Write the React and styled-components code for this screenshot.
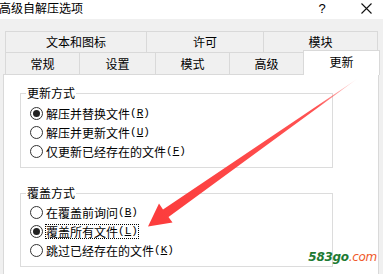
import React from "react";
import styled, { createGlobalStyle } from "styled-components";

const GlobalStyle = createGlobalStyle`
  html, body {
    margin: 0;
    padding: 0;
    background: #f0f0f0;
  }
  body {
    font-family: "Noto Sans CJK SC", "Liberation Sans", sans-serif;
    font-size: 12px;
    color: #000;
  }
`;

const Window = styled.div`
  position: relative;
  width: 383px;
  height: 274px;
  overflow: hidden;
  background: #f0f0f0;
`;

const TitleBar = styled.div`
  height: 19px;
  background: #fff;
  display: flex;
  align-items: center;
`;

const Title = styled.div`
  flex: 1;
  margin-left: -1px;
  font-size: 12px;
  line-height: 14px;
  margin-top: -3px;
`;

const CaptionButton = styled.div`
  width: ${(p) => p.$w}px;
  display: flex;
  justify-content: center;
  align-items: center;
  font-family: "Liberation Sans", sans-serif;
  font-size: 13px;
  line-height: 14px;
  margin-top: -2px;
`;

const Body = styled.div`
  padding-top: 12px;
`;

const TabRow = styled.div`
  display: flex;
  margin-left: 5px;
  height: ${(p) => p.$h}px;
  align-items: flex-end;
`;

const Tab = styled.div`
  box-sizing: border-box;
  width: ${(p) => p.$w}px;
  height: ${(p) => (p.$active ? 25 : p.$h)}px;
  margin-left: ${(p) => (p.$first ? 0 : -1)}px;
  margin-bottom: ${(p) => (p.$active ? -1 : 0)}px;
  border: 1px solid #d9d9d9;
  border-bottom: none;
  background: ${(p) => (p.$active ? "#fff" : "#f0f0f0")};
  position: relative;
  z-index: ${(p) => (p.$active ? 2 : 0)};
  display: flex;
  align-items: center;
  justify-content: center;
  padding-bottom: ${(p) => (p.$active ? 3 : 0)}px;
  line-height: 14px;
`;

const Panel = styled.div`
  position: relative;
  z-index: 1;
  margin-left: 3px;
  width: 376px;
  height: 230px;
  box-sizing: border-box;
  background: #fff;
  border: 1px solid #d9d9d9;
  padding: 11px 0 0 16px;
  display: flex;
  flex-direction: column;
  gap: 18px;
`;

const Group = styled.fieldset`
  box-sizing: border-box;
  width: 313px;
  margin: 0;
  border: 1px solid #dcdcdc;
  padding: ${(p) => p.$pt}px 0 6px 9px;
  min-width: 0;
`;

const Legend = styled.legend`
  padding: 0 1px;
  margin-left: -4px;
  line-height: 14px;
  height: 14px;
`;

const RadioRow = styled.div`
  height: 19px;
  display: flex;
  align-items: center;
  gap: 2px;
  line-height: 13px;
`;

const RadioCircle = styled.span`
  box-sizing: border-box;
  width: 13px;
  height: 13px;
  border-radius: 50%;
  border: 1px solid #333;
  background: #fff;
  display: flex;
  align-items: center;
  justify-content: center;
  flex-shrink: 0;

  &::after {
    content: "";
    width: 7px;
    height: 7px;
    border-radius: 50%;
    background: ${(p) => (p.$checked ? "#222" : "transparent")};
  }
`;

const Label = styled.span`
  border: 1px dotted ${(p) => (p.$focus ? "#000" : "transparent")};
  height: 13px;
  display: flex;
  align-items: center;
  white-space: nowrap;
`;

const Key = styled.span`
  font-family: "Liberation Mono", monospace;
  font-size: 11px;
  text-decoration: underline;
`;

const Paren = styled.span`
  font-family: "Liberation Mono", monospace;
  font-size: 11px;
`;

const Watermark = styled.div`
  position: absolute;
  z-index: 5;
  right: 6px;
  bottom: 10px;
  font-family: "DejaVu Sans", sans-serif;
  font-style: italic;
  font-weight: bold;
  font-size: 12px;
  line-height: 14px;
  color: #1d7a33;
  letter-spacing: -0.3px;

  span {
    color: #f05a2a;
    font-weight: normal;
  }
`;

const ArrowLayer = styled.svg`
  position: absolute;
  z-index: 5;
  left: 0;
  top: 0;
  pointer-events: none;
`;

const Radio = ({ checked, focus, text, k }) => (
  <RadioRow>
    <RadioCircle $checked={checked} />
    <Label $focus={focus}>
      {text}
      <Paren>(</Paren>
      <Key>{k}</Key>
      <Paren>)</Paren>
    </Label>
  </RadioRow>
);

export default function App() {
  return (
    <Window>
      <GlobalStyle />
      <TitleBar>
        <Title>高级自解压选项</Title>
        <CaptionButton $w={54}>?</CaptionButton>
        <CaptionButton $w={34}>
          <svg width="11" height="11" viewBox="0 0 11 11">
            <path d="M0.5 0.5 L10.5 10.5 M10.5 0.5 L0.5 10.5" stroke="#111" strokeWidth="1.1" />
          </svg>
        </CaptionButton>
      </TitleBar>
      <Body>
        <TabRow $h={21}>
          <Tab $first $w={142} $h={21}>文本和图标</Tab>
          <Tab $w={118} $h={21}>许可</Tab>
          <Tab $w={115} $h={21}>模块</Tab>
        </TabRow>
        <TabRow $h={22}>
          <Tab $first $w={75} $h={22}>常规</Tab>
          <Tab $w={77} $h={22}>设置</Tab>
          <Tab $w={75} $h={22}>模式</Tab>
          <Tab $w={75} $h={22}>高级</Tab>
          <Tab $w={77} $h={22} $active>更新</Tab>
        </TabRow>
        <Panel>
          <Group $pt={4}>
            <Legend>更新方式</Legend>
            <Radio checked text="解压并替换文件" k="R" />
            <Radio text="解压并更新文件" k="U" />
            <Radio text="仅更新已经存在的文件" k="F" />
          </Group>
          <Group $pt={3}>
            <Legend>覆盖方式</Legend>
            <Radio text="在覆盖前询问" k="B" />
            <Radio checked focus text="覆盖所有文件" k="L" />
            <Radio text="跳过已经存在的文件" k="K" />
          </Group>
        </Panel>
      </Body>
      <ArrowLayer width="383" height="274" viewBox="0 0 383 274">
        <defs>
          <linearGradient id="fade" x1="357" y1="79" x2="160" y2="215" gradientUnits="userSpaceOnUse">
            <stop offset="0" stopColor="#ff4a4a" stopOpacity="0.15" />
            <stop offset="0.2" stopColor="#ff4040" stopOpacity="0.9" />
            <stop offset="1" stopColor="#fc3d3d" />
          </linearGradient>
        </defs>
        <polygon
          points="357,79 168.5,217 172.5,222.5 148,226.5 159,203.5 163,209.5"
          fill="url(#fade)"
        />
      </ArrowLayer>
      <Watermark>
        583go<span>.com</span>
      </Watermark>
    </Window>
  );
}
